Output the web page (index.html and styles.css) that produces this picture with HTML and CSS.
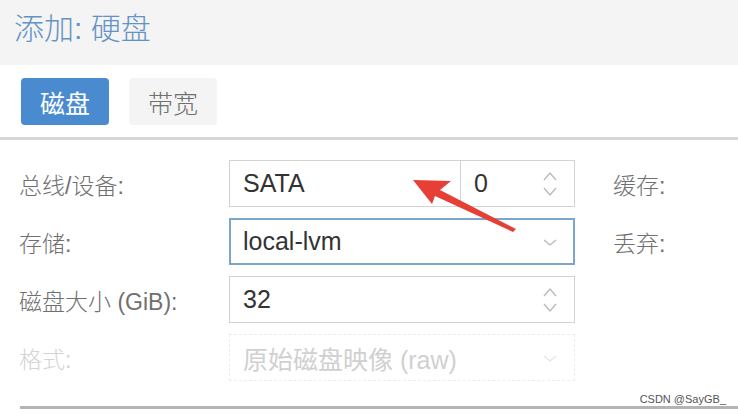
FILE: index.html
```html
<!DOCTYPE html>
<html lang="zh-CN">
  <head>
    <meta charset="UTF-8" />
    <meta name="viewport" content="width=device-width, initial-scale=1.0" />
    <title>添加: 硬盘</title>
    <link rel="stylesheet" href="styles.css">
  </head>
  <body>
    <div class="header">添加: 硬盘</div>
    <div class="tabbar">
      <button class="tab active">磁盘</button>
      <button class="tab">带宽</button>
    </div>
    <div class="form">
      <div class="row">
        <div class="label">总线/设备:</div>
        <div class="field split">
          <div class="part bus">SATA</div>
          <div class="part num">
            <span>0</span>
            <svg class="spin" width="16" height="30" viewBox="0 0 16 30"><path d="M2 11 L8 4 L14 11 M2 19 L8 26 L14 19" fill="none" stroke="#b8b8b8" stroke-width="1.3"/></svg>
          </div>
        </div>
        <div class="label side">缓存:</div>
      </div>
      <div class="row">
        <div class="label">存储:</div>
        <div class="field focus">
          <span>local-lvm</span>
          <svg class="drop" width="16" height="10" viewBox="0 0 16 10"><path d="M2 3 L8 8 L14 3" fill="none" stroke="#b8b8b8" stroke-width="1.3"/></svg>
        </div>
        <div class="label side">丢弃:</div>
      </div>
      <div class="row">
        <div class="label">磁盘大小 (GiB):</div>
        <div class="field">
          <span>32</span>
          <svg class="spin" width="16" height="30" viewBox="0 0 16 30"><path d="M2 11 L8 4 L14 11 M2 19 L8 26 L14 19" fill="none" stroke="#b8b8b8" stroke-width="1.3"/></svg>
        </div>
      </div>
      <div class="row disabled">
        <div class="label">格式:</div>
        <div class="field">
          <span>原始磁盘映像 (raw)</span>
          <svg class="drop" width="16" height="10" viewBox="0 0 16 10"><path d="M2 3 L8 8 L14 3" fill="none" stroke="#e4e4e4" stroke-width="1.3"/></svg>
        </div>
      </div>
    </div>
    <div class="footer">
      <span class="mark">CSDN @SayGB_</span>
    </div>
    <svg class="arrow" width="738" height="416" viewBox="0 0 738 416">
      <polygon points="413,180 451,181 440,190 516,229 513,232 435,196 432,204" fill="#e53f36"/>
    </svg>
  </body>
</html>
```

FILE: styles.css
```css
* {
  margin: 0;
  padding: 0;
  box-sizing: border-box;
}
body {
  font-family: "Liberation Sans", "Noto Sans CJK SC", sans-serif;
  background: #fff;
  color: #333;
  width: 738px;
  height: 416px;
  overflow: hidden;
  position: relative;
}
.header {
  height: 65px;
  background: #f4f4f4;
  padding-left: 14px;
  font-size: 30px;
  font-weight: 300;
  line-height: 58px;
  color: #6393c6;
}
.tabbar {
  height: 75px;
  display: flex;
  align-items: flex-start;
  gap: 20px;
  padding: 13px 0 0 21px;
  border-bottom: 3px solid #d6d6d6;
}
.tab {
  width: 88px;
  height: 47px;
  border: none;
  border-radius: 4px;
  background: #f4f4f4;
  color: #707070;
  font-family: "Noto Sans CJK SC", sans-serif;
  font-size: 25px;
  font-weight: 300;
}
.tab.active {
  background: #4a8bd0;
  color: #fff;
  font-weight: 400;
}
.form {
  padding: 20px 0 0 19px;
  display: flex;
  flex-direction: column;
  gap: 11px;
}
.row {
  display: flex;
  align-items: center;
  height: 47px;
}
.label {
  width: 210px;
  font-size: 23px;
  font-weight: 300;
  color: #707070;
}
.label.side {
  width: auto;
  margin-left: 38px;
}
.field {
  width: 346px;
  height: 47px;
  border: 1px solid #d3d3d3;
  display: flex;
  align-items: center;
  justify-content: space-between;
  padding: 0 16px 0 13px;
  font-size: 25px;
  color: #333;
}
.field.focus {
  border: 2px solid #7ba6c9;
  padding-left: 12px;
  padding-right: 15px;
}
.field.split {
  padding: 0;
}
.part {
  height: 100%;
  display: flex;
  align-items: center;
}
.bus {
  width: 231px;
  padding-left: 13px;
  border-right: 1px solid #d3d3d3;
}
.num {
  flex: 1;
  justify-content: space-between;
  padding: 0 16px 0 13px;
}
.disabled .label {
  color: #d4d4d4;
}
.disabled .field {
  border: 1px dashed #ececec;
  color: #d0d0d0;
}
.footer {
  margin: 25px 0 0 20px;
  height: 3px;
  background: #b4b4b4;
  position: relative;
}
.mark {
  position: absolute;
  right: 12px;
  bottom: 4px;
  font-size: 11px;
  color: #555;
}
.arrow {
  position: absolute;
  left: 0;
  top: 0;
}
```
